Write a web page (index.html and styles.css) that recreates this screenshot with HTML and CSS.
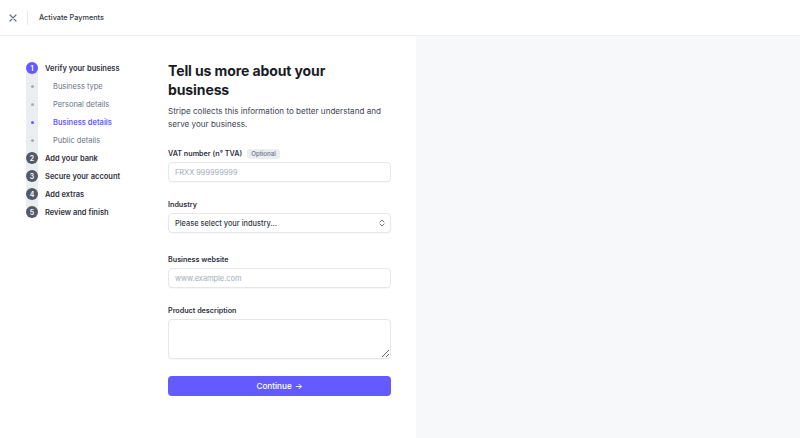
FILE: index.html
```html
<!DOCTYPE html>
<html lang="en">
<head>
    <meta charset="UTF-8">
    <meta name="viewport" content="width=device-width, initial-scale=1.0">
    <title>Activate Payments</title>
    <link rel="stylesheet" href="styles.css">
</head>
<body>
    <header class="topbar">
        <button class="close-btn" aria-label="Close">
            <svg width="8" height="8" viewBox="0 0 8 8"><path d="M1 1L7 7M7 1L1 7" stroke="#687385" stroke-width="1.2" stroke-linecap="round"/></svg>
        </button>
        <span class="divider"></span>
        <span class="topbar-title">Activate Payments</span>
    </header>

    <div class="page">
        <div class="left">
            <!-- steps -->
            <ul class="steps">
                <li class="step active"><span class="marker"><span class="num">1</span></span>Verify your business</li>
                <li class="sub"><span class="marker"><span class="dot"></span></span>Business type</li>
                <li class="sub"><span class="marker"><span class="dot"></span></span>Personal details</li>
                <li class="sub current"><span class="marker"><span class="dot"></span></span>Business details</li>
                <li class="sub"><span class="marker"><span class="dot"></span></span>Public details</li>
                <li class="step"><span class="marker"><span class="num">2</span></span>Add your bank</li>
                <li class="step"><span class="marker"><span class="num">3</span></span>Secure your account</li>
                <li class="step"><span class="marker"><span class="num">4</span></span>Add extras</li>
                <li class="step"><span class="marker"><span class="num">5</span></span>Review and finish</li>
            </ul>

            <form class="form">
                <h1>Tell us more about your business</h1>
                <p class="intro">Stripe collects this information to better understand and serve your business.</p>

                <label class="field vat">
                    <span class="label">VAT number (n° TVA) <span class="badge">Optional</span></span>
                    <input type="text" placeholder="FRXX 999999999">
                </label>

                <label class="field">
                    <span class="label">Industry</span>
                    <span class="select">
                        Please select your industry...
                        <svg width="6" height="8" viewBox="0 0 6 8"><path d="M1 3L3 1L5 3M1 5L3 7L5 5" fill="none" stroke="#687385" stroke-width="1" stroke-linecap="round" stroke-linejoin="round"/></svg>
                    </span>
                </label>

                <label class="field website">
                    <span class="label">Business website</span>
                    <input type="text" placeholder="www.example.com">
                </label>

                <label class="field">
                    <span class="label">Product description</span>
                    <textarea></textarea>
                </label>

                <button type="button" class="continue">Continue <span class="arrow">&rarr;</span></button>
            </form>
        </div>
        <div class="right"></div>
    </div>
</body>
</html>
```

FILE: styles.css
```css
* {
    box-sizing: border-box;
}
html, body {
    margin: 0;
    height: 100%;
}
body {
    font-family: Inter, 'Noto Sans', sans-serif;
    color: #30313d;
    background: #fff;
}
.topbar {
    height: 36px;
    display: flex;
    align-items: center;
    border-bottom: 1px solid #ebeef1;
    padding-left: 9px;
}
.close-btn {
    border: none;
    background: none;
    padding: 0;
    width: 8px;
    height: 8px;
    display: flex;
}
.divider {
    width: 1px;
    height: 14px;
    background: #e3e8ee;
    margin: 0 11px 0 10px;
}
.topbar-title {
    font-size: 7.3px;
    font-weight: 500;
    color: #353a44;
}
.page {
    display: flex;
    height: calc(100% - 36px);
}
.left {
    width: 416px;
    display: flex;
    padding: 23px 0 0 26px;
}
.right {
    flex: 1;
    background: #f6f8fa;
}

/* steps */
.steps {
    list-style: none;
    margin: 0;
    padding: 0;
    width: 142px;
    position: relative;
    align-self: flex-start;
}
.steps::before {
    content: "";
    position: absolute;
    left: 0;
    top: 3px;
    bottom: 3px;
    width: 12px;
    border-radius: 6px;
    background: #ebeef1;
}
.steps li {
    height: 18px;
    display: flex;
    align-items: center;
    position: relative;
    font-size: 7.5px;
}
.marker {
    width: 12px;
    display: flex;
    justify-content: center;
    align-items: center;
    margin-right: 7px;
}
.num {
    width: 12px;
    height: 12px;
    border-radius: 50%;
    background: #545969;
    color: #fff;
    font-size: 7px;
    display: flex;
    align-items: center;
    justify-content: center;
}
.step {
    font-weight: 600;
    color: #30313d;
}
.step.active .num {
    background: #635bff;
}
.sub {
    color: #687385;
}
.sub .marker {
    margin-right: 15px;
}
.dot {
    width: 3px;
    height: 3px;
    border-radius: 50%;
    background: #a3acb9;
}
.sub.current {
    color: #635bff;
    font-weight: 600;
}
.sub.current .dot {
    background: #635bff;
}

/* form */
.form {
    width: 223px;
    flex: none;
    padding-top: 2px;
}
h1 {
    max-width: 200px;
    font-size: 14px;
    font-weight: 700;
    line-height: 19px;
    letter-spacing: -0.1px;
    margin: 0 0 6px;
    color: #1a1b25;
}
.intro {
    font-size: 8.1px;
    line-height: 13px;
    color: #414552;
    margin: 0 0 15px;
}
.field {
    display: block;
    margin-bottom: 15px;
}
.field.website {
    margin-top: 19px;
}
.label {
    display: flex;
    align-items: center;
    font-size: 7.2px;
    font-weight: 600;
    line-height: 13px;
    padding-top: 1px;
    color: #30313d;
    margin-bottom: 2px;
}
.badge {
    margin-left: 5px;
    background: #ebeef1;
    color: #687385;
    font-size: 6.2px;
    font-weight: 500;
    line-height: 10px;
    padding: 0 4px;
    border-radius: 3px;
}
input, textarea, .select {
    display: block;
    width: 100%;
    border: 1px solid #e3e8ee;
    border-radius: 4px;
    background: #fff;
    box-shadow: 0 1px 1px rgba(0, 0, 0, 0.03);
    font-family: inherit;
    font-size: 7.4px;
    color: #30313d;
    outline: none;
}
input {
    height: 20px;
    padding: 0 6px;
}
input::placeholder {
    color: #a3acb9;
}
.select {
    height: 20px;
    padding: 0 5px 0 6px;
    display: flex;
    align-items: center;
    justify-content: space-between;
    font-weight: 500;
    color: #353a44;
}
textarea {
    height: 40px;
    resize: vertical;
    padding: 4px 6px;
}
.continue {
    display: flex;
    align-items: center;
    justify-content: center;
    gap: 3px;
    width: 100%;
    height: 20px;
    margin-top: 17px;
    border: none;
    border-radius: 4px;
    background: #635bff;
    color: #fff;
    font-family: inherit;
    font-size: 8.2px;
    font-weight: 500;
    cursor: pointer;
}
```
